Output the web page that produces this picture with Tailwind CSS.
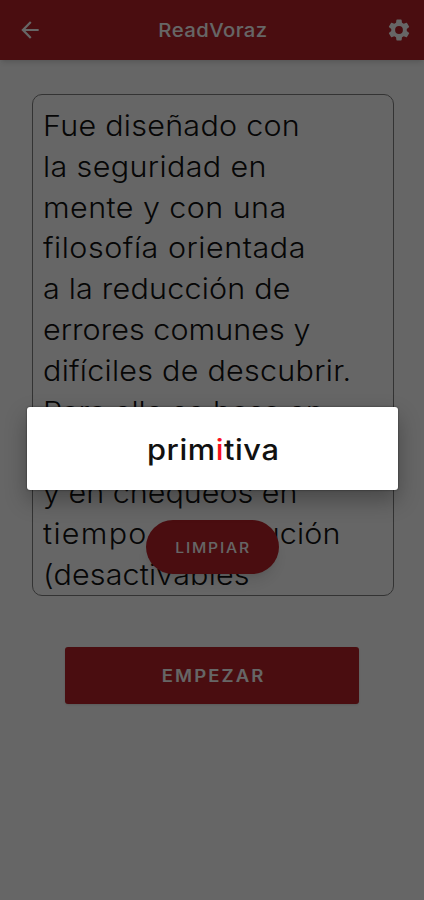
<!DOCTYPE html>
<html lang="es"><head><meta charset="utf-8"><title>ReadVoraz</title>
<script src="https://cdn.jsdelivr.net/npm/@tailwindcss/browser@4"></script></head>
<body class="bg-white font-['Inter',sans-serif]">
<div class="relative flex h-[900px] w-[424px] flex-col overflow-hidden">
<header class="flex h-[60px] shrink-0 items-center justify-between bg-[#b92228] pr-[12px] pl-[17px] text-white shadow-md">
<svg class="size-[26px]" viewBox="0 0 24 24" fill="currentColor"><path d="M20 11H7.83l5.59-5.59L12 4l-8 8 8 8 1.41-1.41L7.83 13H20z"/></svg>
<h1 class="scale-x-[1.07] pt-0.5 pr-[3px] text-[19px] font-medium tracking-[0.4px]">ReadVoraz</h1>
<svg class="size-[26px]" viewBox="0 0 24 24" fill="currentColor"><path d="M19.14 12.94c.04-.3.06-.61.06-.94s-.02-.64-.07-.94l2.03-1.58a.49.49 0 0 0 .12-.61l-1.92-3.32a.49.49 0 0 0-.59-.22l-2.39.96a7 7 0 0 0-1.62-.94l-.36-2.54a.48.48 0 0 0-.48-.41h-3.84a.47.47 0 0 0-.47.41l-.36 2.54c-.59.24-1.13.57-1.62.94l-2.39-.96a.47.47 0 0 0-.59.22L2.74 8.87a.47.47 0 0 0 .12.61l2.03 1.58a6.8 6.8 0 0 0 0 1.88l-2.03 1.58a.49.49 0 0 0-.12.61l1.92 3.32c.12.22.37.29.59.22l2.39-.96c.5.38 1.03.7 1.62.94l.36 2.54c.05.24.24.41.48.41h3.84c.24 0 .44-.17.47-.41l.36-2.54a7 7 0 0 0 1.62-.94l2.39.96c.22.08.47 0 .59-.22l1.92-3.32a.47.47 0 0 0-.12-.61zM12 15.6a3.6 3.6 0 1 1 0-7.2 3.6 3.6 0 0 1 0 7.2z"/></svg>
</header>
<main class="flex flex-col">
<section class="mt-[34px] ml-[32px] h-[502px] w-[362px] overflow-hidden rounded-[10px] border border-[#808080] pt-[11px] pl-[10px]">
<div class="origin-left scale-x-[1.07] text-[28.5px] leading-[40.8px] font-light whitespace-nowrap text-[#111]">
<p class="tracking-[0.25px]">Fue diseñado con</p>
<p class="tracking-[0.35px]">la seguridad en</p>
<p class="tracking-[0.4px]">mente y con una</p>
<p class="tracking-[0.5px]">filosofía orientada</p>
<p class="tracking-[0.2px]">a la reducción de</p>
<p class="tracking-[0.05px]">errores comunes y</p>
<p class="tracking-[0.25px]">difíciles de descubrir.</p>
<p class="tracking-[-0.2px]">Para ello se basa en</p>
<p>un tipado muy fuerte</p>
<p>y en chequeos en</p>
<p class="tracking-[0.5px]"><span class="tracking-[1.2px]">tiempo</span><span class="tracking-[0.15px]"> de ejecución</span></p>
<p class="tracking-[0.15px]">(desactivables</p>
</div>
</section>
<button class="mt-[51px] ml-[65px] flex h-[57px] w-[294px] items-center justify-center rounded-[3px] bg-[#b92228] pt-[3px] pl-[3px] text-[17px] font-semibold text-white shadow-sm"><span class="scale-x-[1.09] tracking-[1.9px]">EMPEZAR</span></button>
</main>
<button class="absolute top-[520px] left-[146px] flex h-[54px] w-[133px] items-center justify-center rounded-full bg-[#b92228] pt-px pl-0.5 text-[14.5px] font-medium text-white shadow-lg"><span class="scale-x-[1.08] tracking-[1.7px]">LIMPIAR</span></button>
<div class="absolute inset-0 bg-black/60"></div>
<div class="absolute top-[407px] left-[27px] flex h-[83px] w-[371px] items-center justify-center rounded-[3px] bg-white pt-0.5 text-[28px] font-medium text-[#111] shadow-[0_0_2px_rgba(0,0,0,0.6),0_10px_22px_rgba(0,0,0,0.3)]"><p class="scale-x-[1.1] pl-px tracking-[0.5px]">prim<span class="text-[#fb1020]">i</span>tiva</p></div>
</div>
</body></html>
